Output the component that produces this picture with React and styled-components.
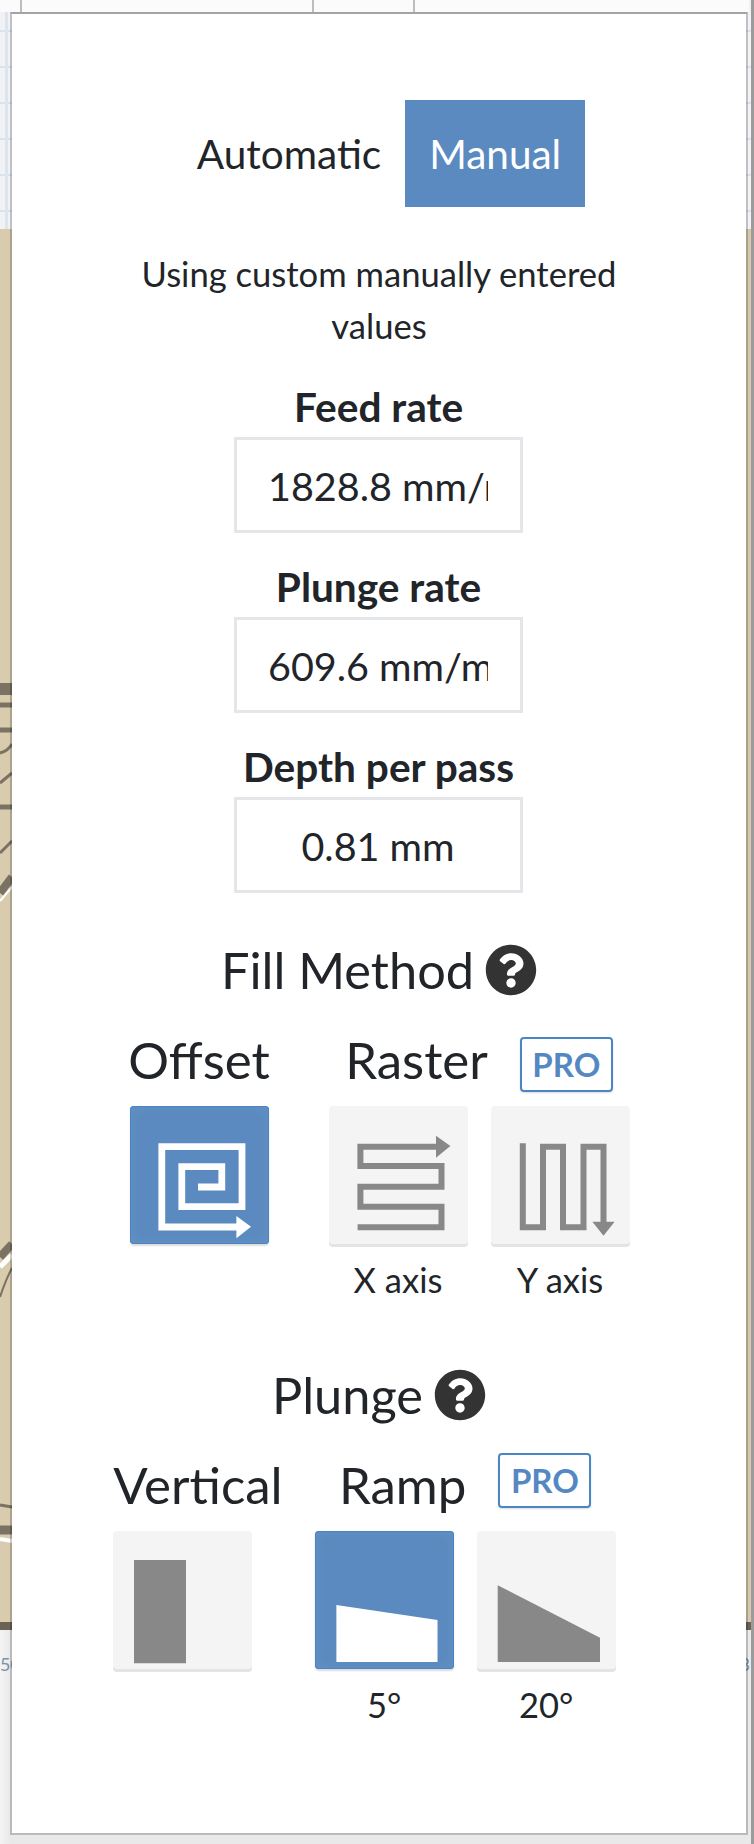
import React from 'react'
import styled, { createGlobalStyle } from 'styled-components'
import { FaQuestionCircle } from 'react-icons/fa'

const GlobalStyle = createGlobalStyle`
    html, body {
        margin: 0;
        padding: 0;
        background: #fff;
    }
    * {
        box-sizing: border-box;
    }
`

const fields = [
    { label: 'Feed rate', value: '1828.8 mm/min' },
    { label: 'Plunge rate', value: '609.6 mm/min' },
    { label: 'Depth per pass', value: '0.81 mm' },
]

function OffsetIcon() {
    return (
        <Icon viewBox="0 0 138 138">
            <path d="M68 81H91.8V60.7H51.8V100.7H112V40.7H31.8V121H107" fill="none" stroke="#fff" strokeWidth="6.8" />
            <polygon points="106.4,110 121,120.7 106.4,132.3" fill="#fff" />
        </Icon>
    )
}

function XAxisIcon() {
    return (
        <Icon viewBox="0 0 138 138">
            <path d="M28.6 121.3H112.5V100.7H31.4V80.7H112.5V60H31.4V40.7H108" fill="none" stroke="#888" strokeWidth="6" />
            <polygon points="107,29.7 121.4,40 107,51.7" fill="#888" />
        </Icon>
    )
}

function YAxisIcon() {
    return (
        <Icon viewBox="0 0 138 138">
            <path d="M31.8 37.3V121.3H52V40.7H72V121.3H92.5V40.7H112.5V118" fill="none" stroke="#888" strokeWidth="6" />
            <polygon points="101.4,115.7 123.6,115.7 112.5,129.7" fill="#888" />
        </Icon>
    )
}

function ShapeIcon({ points, color }) {
    return (
        <Icon viewBox="0 0 138 138">
            <polygon points={points} fill={color} />
        </Icon>
    )
}

function App() {
    return (
        <Page>
            <GlobalStyle />
            <Backdrop>
                <TopStrip>
                    <HeaderCell $width={22} />
                    <HeaderCell $width={292} />
                    <HeaderCell $width={101} />
                </TopStrip>
                <GridPaper />
                <Material>
                    <svg width="754" height="1393" viewBox="0 0 754 1393">
                        <g fill="none" stroke="#7a7264" filter="url(#soft)">
                            <path d="M0 460H12" strokeWidth="12" />
                            <path d="M0 476H12" strokeWidth="5" />
                            <path d="M0 501H12" strokeWidth="5" />
                            <path d="M0 524Q8 522 12 515" strokeWidth="3" />
                            <path d="M0 554L12 544" strokeWidth="3" />
                            <path d="M0 578H12" strokeWidth="5" />
                            <path d="M0 624L12 612" strokeWidth="3" />
                            <path d="M0 664L12 648" strokeWidth="8" />
                            <path d="M0 1028L12 1015" strokeWidth="8" />
                            <path d="M0 1068Q6 1050 12 1039" strokeWidth="2" />
                            <path d="M0 1276L12 1278" strokeWidth="3" />
                            <path d="M0 1301H12" strokeWidth="9" />
                        </g>
                        <g fill="none" stroke="#fff" filter="url(#soft)">
                            <path d="M0 672L12 658" strokeWidth="2" />
                            <path d="M0 1038L12 1026" strokeWidth="5" />
                            <path d="M0 1310L12 1312" strokeWidth="4" />
                        </g>
                        <defs>
                            <filter id="soft" filterUnits="userSpaceOnUse" x="0" y="0" width="754" height="1393">
                                <feGaussianBlur stdDeviation="0.7" />
                            </filter>
                        </defs>
                    </svg>
                </Material>
                <BottomBand />
                <Ruler>
                    <span>50</span>
                    <span>3</span>
                </Ruler>
                <EdgeLine />
            </Backdrop>

            <Panel>
                <Toggle>
                    <ToggleTab>Automatic</ToggleTab>
                    <ToggleTab $active>Manual</ToggleTab>
                </Toggle>
                <Description>Using custom manually entered values</Description>

                <Fields>
                    {fields.map((field) => (
                        <Field key={field.label}>
                            <FieldLabel>{field.label}</FieldLabel>
                            <FieldInput type="text" readOnly value={field.value} />
                        </Field>
                    ))}
                </Fields>

                <SectionTitle $top={49}>
                    Fill Method
                    <FaQuestionCircle size={52} color="#333" />
                </SectionTitle>
                <OptionRow $gap={60} $shift={-1}>
                    <OptionGroup $width={139}>
                        <GroupHead>
                            <GroupName>Offset</GroupName>
                        </GroupHead>
                        <Options>
                            <Option>
                                <OptionButton $active><OffsetIcon /></OptionButton>
                            </Option>
                        </Options>
                    </OptionGroup>
                    <OptionGroup>
                        <GroupHead>
                            <GroupName>Raster</GroupName>
                            <ProBadge $offset={8}>PRO</ProBadge>
                        </GroupHead>
                        <Options>
                            <Option>
                                <OptionButton><XAxisIcon /></OptionButton>
                                <Caption>X axis</Caption>
                            </Option>
                            <Option>
                                <OptionButton><YAxisIcon /></OptionButton>
                                <Caption>Y axis</Caption>
                            </Option>
                        </Options>
                    </OptionGroup>
                </OptionRow>

                <SectionTitle $top={65}>
                    Plunge
                    <FaQuestionCircle size={52} color="#333" />
                </SectionTitle>
                <OptionRow $gap={32} $shift={29}>
                    <OptionGroup>
                        <GroupHead>
                            <GroupName>Vertical</GroupName>
                        </GroupHead>
                        <Options>
                            <Option>
                                <OptionButton>
                                    <ShapeIcon points="21,29 73,29 73,132.3 21,132.3" color="#888" />
                                </OptionButton>
                            </Option>
                        </Options>
                    </OptionGroup>
                    <OptionGroup>
                        <GroupHead>
                            <GroupName>Ramp</GroupName>
                            <ProBadge $offset={-10}>PRO</ProBadge>
                        </GroupHead>
                        <Options>
                            <Option>
                                <OptionButton $active>
                                    <ShapeIcon points="21.4,74 122.5,89 122.5,131 21.4,131" color="#fff" />
                                </OptionButton>
                                <Caption>5°</Caption>
                            </Option>
                            <Option>
                                <OptionButton>
                                    <ShapeIcon points="20.7,54.3 123,106.7 123,131 20.7,131" color="#888" />
                                </OptionButton>
                                <Caption>20°</Caption>
                            </Option>
                        </Options>
                    </OptionGroup>
                </OptionRow>
            </Panel>
        </Page>
    )
}

const Page = styled.div`
    position: relative;
    width: 754px;
    height: 1844px;
    overflow: hidden;
    padding: 12px 6px 9px 10px;
    font-family: "Lato", "Liberation Sans", sans-serif;
    color: #212529;
`

const Backdrop = styled.div`
    position: absolute;
    inset: 0;
    display: flex;
    flex-direction: column;
    background: #f0f0f1;
`

const TopStrip = styled.div`
    display: flex;
    height: 12px;
    width: 749px;
    background: #fbfbfb;
`

const HeaderCell = styled.div`
    width: ${(props) => props.$width}px;
    border-right: 2px solid #bdbdbd;
`

const GridPaper = styled.div`
    height: 217px;
    background-color: #f2f2f4;
    background-image:
        linear-gradient(to right, transparent 5px, #dbe5ef 5px, #dbe5ef 8px, transparent 8px),
        repeating-linear-gradient(to bottom, transparent 0, transparent 18px, #d8e3ee 18px, #d8e3ee 20px, transparent 20px, transparent 36px);
`

const Material = styled.div`
    height: 1393px;
    overflow: hidden;
    background: linear-gradient(to right, #d8cbae, #d5c8ac);
    svg {
        display: block;
    }
`

const BottomBand = styled.div`
    height: 8px;
    background: #6a6355;
`

const Ruler = styled.div`
    flex: 1;
    display: flex;
    justify-content: space-between;
    padding: 22px 4px 0 0;
    font-size: 18px;
    line-height: 24px;
    color: #7c92ad;
    background: linear-gradient(to right, #f4f4f4, #e9e9e9 10px);
`

const EdgeLine = styled.div`
    position: absolute;
    top: 0;
    bottom: 0;
    right: 0;
    width: 3px;
    background: #9b9b9b;
`

const Panel = styled.div`
    position: relative;
    height: 1823px;
    display: flex;
    flex-direction: column;
    align-items: center;
    background: #fff;
    background-clip: padding-box;
    border: 2px solid rgba(0, 0, 0, 0.2);
    border-top-color: rgba(0, 0, 0, 0.32);
    padding-top: 86px;
`

const Toggle = styled.div`
    display: flex;
`

const ToggleTab = styled.div`
    height: 107px;
    padding: 0 24px;
    display: flex;
    align-items: center;
    font-size: 40.5px;
    color: ${(props) => (props.$active ? '#fff' : '#212529')};
    background: ${(props) => (props.$active ? '#5a8abf' : 'transparent')};
`

const Description = styled.div`
    width: 520px;
    margin-top: 41px;
    font-size: 34.6px;
    line-height: 52px;
    text-align: center;
`

const Fields = styled.div`
    margin-top: 31px;
    margin-right: 1px;
    display: flex;
    flex-direction: column;
    gap: 30px;
`

const Field = styled.div`
    display: flex;
    flex-direction: column;
    align-items: center;
    gap: 6px;
`

const FieldLabel = styled.div`
    font-size: 40.6px;
    font-weight: 700;
    line-height: 48px;
`

const FieldInput = styled.input`
    width: 289px;
    height: 96px;
    padding: 0 32px 0 31px;
    border: 3px solid #e4e6ea;
    border-radius: 0;
    outline: none;
    background: #fff;
    font-family: inherit;
    font-size: 39.5px;
    color: #212529;
    text-align: center;
`

const SectionTitle = styled.div`
    height: 56px;
    margin-top: ${(props) => props.$top}px;
    display: flex;
    align-items: center;
    gap: 11px;
    font-size: 50.5px;
    line-height: 56px;
`

const OptionRow = styled.div`
    display: flex;
    gap: ${(props) => props.$gap}px;
    margin-top: 34px;
    margin-right: ${(props) => props.$shift || 0}px;
`

const OptionGroup = styled.div`
    display: flex;
    flex-direction: column;
    width: ${(props) => (props.$width ? `${props.$width}px` : 'auto')};
`

const GroupHead = styled.div`
    height: 56px;
    margin-bottom: 18px;
    display: flex;
    align-items: center;
    justify-content: center;
    gap: 32px;
`

const GroupName = styled.div`
    font-size: 51px;
    line-height: 56px;
`

const ProBadge = styled.div`
    width: 93px;
    height: 55px;
    margin-top: ${(props) => props.$offset}px;
    display: flex;
    align-items: center;
    justify-content: center;
    font-size: 33px;
    font-weight: 700;
    color: #5488c2;
    border: 2px solid #4a86c4;
    border-radius: 4px;
    box-shadow: 0 1px 2px rgba(0, 0, 0, 0.15);
`

const Options = styled.div`
    display: flex;
    gap: 23px;
`

const Option = styled.div`
    width: 139px;
    display: flex;
    flex-direction: column;
    align-items: center;
`

const OptionButton = styled.div`
    width: 139px;
    height: 138px;
    border-radius: 4px;
    background: ${(props) => (props.$active ? '#5a8abf' : '#f4f4f4')};
    box-shadow: ${(props) => (props.$active
        ? 'inset 0 0 0 1px #4a85c3, inset 0 0 14px rgba(255, 255, 255, 0.08), 0 2px 2px #dcdcdc'
        : '0 3px 0 #e4e4e4')};
`

const Icon = styled.svg`
    display: block;
    width: 138px;
    height: 138px;
`

const Caption = styled.div`
    margin-top: 14px;
    font-size: 34.5px;
    line-height: 44px;
`

export default App
